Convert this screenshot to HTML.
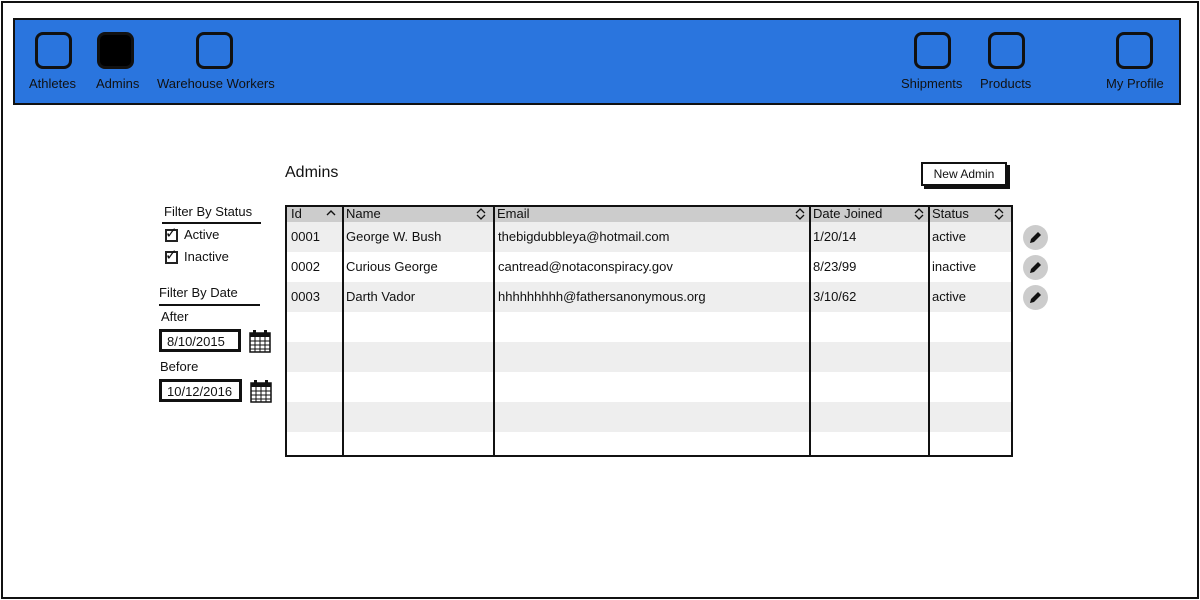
<!DOCTYPE html>
<html><head><style>
*{margin:0;padding:0;box-sizing:border-box}
body{width:1200px;height:600px;position:relative;background:#fff;font-family:"Liberation Sans",sans-serif;font-size:13px;color:#111;overflow:hidden}
.a{position:absolute;white-space:nowrap}
.ic{position:absolute;width:37px;height:37px;border:3px solid #111;border-radius:8px;top:32px}
.lb{position:absolute;top:76px;font-size:13px}
.cell{position:absolute;font-size:13px}
.row{position:absolute;left:287px;width:724px;height:30px}
.vl{position:absolute;top:206px;width:2px;height:250px;background:#111}
.ed{position:absolute;left:1023px;width:25px;height:25px;border-radius:50%;background:#ccc}
.ed svg{position:absolute;left:5px;top:5px}
.cb{position:absolute;width:13px;height:13px;border:2px solid #222}
.inp{position:absolute;border:3px solid #111;background:#fff;font-size:13px;padding:2px 5px;height:23px}
</style></head><body>
<div class="a" style="left:1px;top:1px;width:1198px;height:598px;border:2px solid #111"></div>
<div class="a" style="left:13px;top:18px;width:1168px;height:87px;background:#2a75de;border:2px solid #111"></div>
<div class="ic" style="left:35px"></div>
<div class="ic" style="left:97px;background:#000"></div>
<div class="ic" style="left:196px"></div>
<div class="ic" style="left:914px"></div>
<div class="ic" style="left:988px"></div>
<div class="ic" style="left:1116px"></div>
<div class="lb" style="left:29px">Athletes</div>
<div class="lb" style="left:96px">Admins</div>
<div class="lb" style="left:157px">Warehouse Workers</div>
<div class="lb" style="left:901px">Shipments</div>
<div class="lb" style="left:980px">Products</div>
<div class="lb" style="left:1106px">My Profile</div>

<div class="a" style="left:285px;top:164px;font-size:16px">Admins</div>
<div class="a" style="left:921px;top:162px;width:86px;height:24px;border:2px solid #111;box-shadow:3px 3px 0 #111;background:#fff;text-align:center;line-height:20px;font-size:12px">New Admin</div>

<div class="a" style="left:164px;top:204px">Filter By Status</div>
<div class="a" style="left:162px;top:222px;width:99px;height:2px;background:#111"></div>
<div class="cb" style="left:165px;top:229px"></div><div class="a" style="left:165px;top:224px;font-size:15px">✓</div>
<div class="a" style="left:184px;top:227px">Active</div>
<div class="cb" style="left:165px;top:251px"></div><div class="a" style="left:165px;top:246px;font-size:15px">✓</div>
<div class="a" style="left:184px;top:249px">Inactive</div>
<div class="a" style="left:159px;top:285px">Filter By Date</div>
<div class="a" style="left:159px;top:304px;width:101px;height:2px;background:#111"></div>
<div class="a" style="left:161px;top:309px">After</div>
<div class="inp" style="left:159px;top:329px;width:82px">8/10/2015</div>
<div class="a" style="left:160px;top:359px">Before</div>
<div class="inp" style="left:159px;top:379px;width:83px">10/12/2016</div>
<svg class="a" style="left:249px;top:329px" width="22" height="24" viewBox="0 0 22 24"><rect x="1" y="4" width="20" height="19" fill="#fff" stroke="#111" stroke-width="1.5"/><rect x="1" y="4" width="20" height="4" fill="#111"/><path d="M1 12H21M1 16H21M1 20H21M6 8V23M11 8V23M16 8V23" stroke="#111" stroke-width="1"/><rect x="4" y="1" width="3" height="5" fill="#111"/><rect x="15" y="1" width="3" height="5" fill="#111"/></svg>
<svg class="a" style="left:250px;top:379px" width="22" height="24" viewBox="0 0 22 24"><rect x="1" y="4" width="20" height="19" fill="#fff" stroke="#111" stroke-width="1.5"/><rect x="1" y="4" width="20" height="4" fill="#111"/><path d="M1 12H21M1 16H21M1 20H21M6 8V23M11 8V23M16 8V23" stroke="#111" stroke-width="1"/><rect x="4" y="1" width="3" height="5" fill="#111"/><rect x="15" y="1" width="3" height="5" fill="#111"/></svg>

<div class="a" style="left:287px;top:207px;width:724px;height:15px;background:#ccc"></div>
<div class="row" style="top:222px;background:#eee"></div>
<div class="row" style="top:282px;background:#eee"></div>
<div class="row" style="top:342px;background:#eee"></div>
<div class="row" style="top:402px;background:#eee"></div>
<div class="a" style="left:285px;top:205px;width:728px;height:252px;border:2px solid #111"></div>
<div class="vl" style="left:342px"></div>
<div class="vl" style="left:493px"></div>
<div class="vl" style="left:809px"></div>
<div class="vl" style="left:928px"></div>

<div class="cell" style="left:291px;top:206px">Id</div>
<svg class="a" style="left:326px;top:209px" width="10" height="7"><path d="M1 6L5 2L9 6" fill="none" stroke="#111" stroke-width="1.4"/></svg>
<div class="cell" style="left:346px;top:206px">Name</div>
<div class="cell" style="left:497px;top:206px">Email</div>
<div class="cell" style="left:813px;top:206px">Date Joined</div>
<div class="cell" style="left:932px;top:206px">Status</div>
<svg class="a" style="left:476px;top:208px" width="10" height="12"><path d="M1 5L5 1L9 5M1 7L5 11L9 7" fill="none" stroke="#111" stroke-width="1.3"/></svg>
<svg class="a" style="left:795px;top:208px" width="10" height="12"><path d="M1 5L5 1L9 5M1 7L5 11L9 7" fill="none" stroke="#111" stroke-width="1.3"/></svg>
<svg class="a" style="left:914px;top:208px" width="10" height="12"><path d="M1 5L5 1L9 5M1 7L5 11L9 7" fill="none" stroke="#111" stroke-width="1.3"/></svg>
<svg class="a" style="left:994px;top:208px" width="10" height="12"><path d="M1 5L5 1L9 5M1 7L5 11L9 7" fill="none" stroke="#111" stroke-width="1.3"/></svg>

<div class="cell" style="left:291px;top:229px">0001</div><div class="cell" style="left:346px;top:229px">George W. Bush</div><div class="cell" style="left:498px;top:229px">thebigdubbleya@hotmail.com</div><div class="cell" style="left:813px;top:229px">1/20/14</div><div class="cell" style="left:932px;top:229px">active</div>
<div class="cell" style="left:291px;top:259px">0002</div><div class="cell" style="left:346px;top:259px">Curious George</div><div class="cell" style="left:498px;top:259px">cantread@notaconspiracy.gov</div><div class="cell" style="left:813px;top:259px">8/23/99</div><div class="cell" style="left:932px;top:259px">inactive</div>
<div class="cell" style="left:291px;top:289px">0003</div><div class="cell" style="left:346px;top:289px">Darth Vador</div><div class="cell" style="left:498px;top:289px">hhhhhhhhh@fathersanonymous.org</div><div class="cell" style="left:813px;top:289px">3/10/62</div><div class="cell" style="left:932px;top:289px">active</div>

<div class="ed" style="top:225px"><svg width="15" height="15" viewBox="0 0 15 15"><path d="M2 13L3 9L10 2L13 5L6 12Z" fill="#111"/></svg></div>
<div class="ed" style="top:255px"><svg width="15" height="15" viewBox="0 0 15 15"><path d="M2 13L3 9L10 2L13 5L6 12Z" fill="#111"/></svg></div>
<div class="ed" style="top:285px"><svg width="15" height="15" viewBox="0 0 15 15"><path d="M2 13L3 9L10 2L13 5L6 12Z" fill="#111"/></svg></div>
</body></html>
